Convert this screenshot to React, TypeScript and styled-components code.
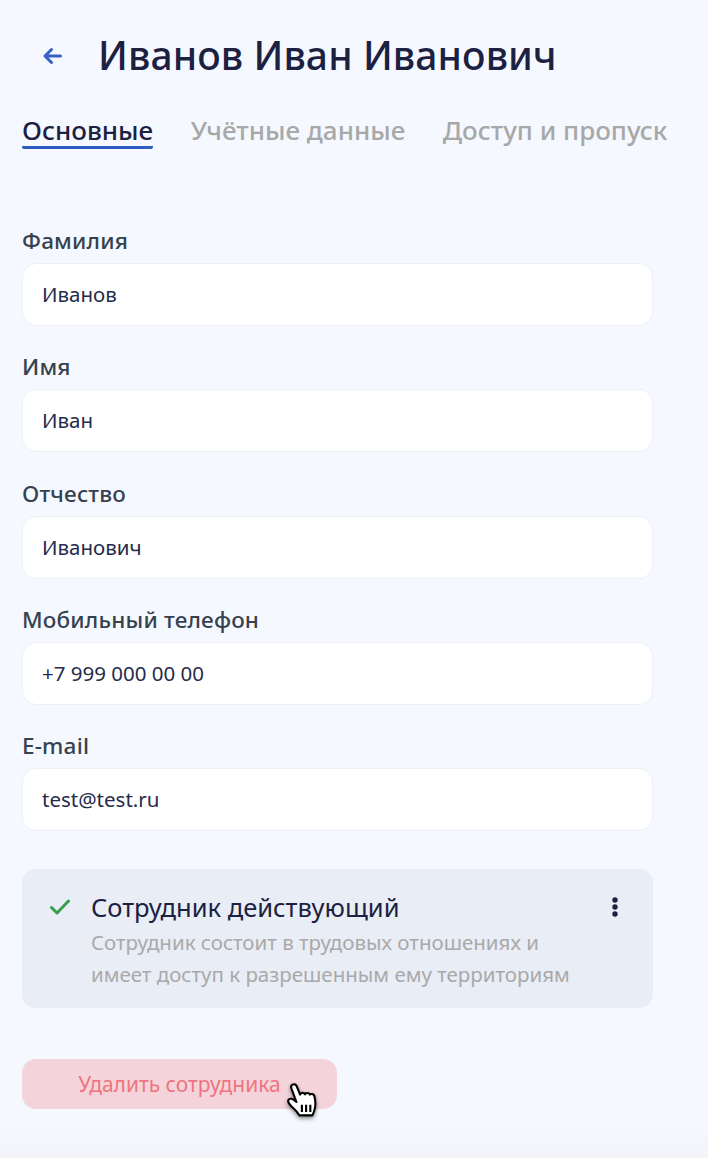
import React from "react";
import styled, { createGlobalStyle } from "styled-components";

const Global = createGlobalStyle`
  html, body { margin: 0; padding: 0; }
  body { font-family: "Noto Sans", "Open Sans", sans-serif; background: #f5f8ff; }
  * { box-sizing: border-box; }
`;

const Page = styled.div`
  width: 708px;
  height: 1158px;
  overflow: hidden;
  padding: 0 55px 0 22px;
  background: linear-gradient(to bottom, #f5f8ff 0, #f5f8ff 1120px, #f2f4f9 1158px);
`;

const Header = styled.header`
  display: flex;
  align-items: center;
  height: 50px;
  margin-top: 31px;
  padding-left: 20px;
  gap: 36px;
`;

const BackButton = styled.button`
  display: flex;
  width: 20px;
  height: 20px;
  padding: 0;
  border: 0;
  background: none;
  color: #3560c8;
`;

const Title = styled.h1`
  margin: 0;
  font-size: 39px;
  letter-spacing: 0.1px;
  line-height: 48px;
  height: 50px;
  font-weight: 500;
  color: #1c2142;
  white-space: nowrap;
`;

const Tabs = styled.nav`
  display: flex;
  gap: 37.5px;
  margin-top: 32px;
  height: 36px;
  white-space: nowrap;
`;

const Tab = styled.div<{ $active?: boolean }>`
  height: 36px;
  font-size: 26px;
  line-height: 34px;
  font-weight: 500;
  color: ${(p) => (p.$active ? "#1c2142" : "#a8a8a8")};
  border-bottom: ${(p) => (p.$active ? "3px solid #2f5bc4" : "0")};
  border-radius: 2px;
`;

const Form = styled.form`
  margin-top: 75px;
  display: flex;
  flex-direction: column;
  gap: 24.33px;
`;

const Field = styled.label`
  display: flex;
  flex-direction: column;
  gap: 4px;
`;

const Label = styled.span`
  font-size: 22.5px;
  letter-spacing: 0.18px;
  line-height: 33px;
  height: 35px;
  font-weight: 500;
  color: #36424e;
`;

const Input = styled.div`
  height: 63px;
  padding: 0 19px 1px;
  display: flex;
  align-items: center;
  background: #fff;
  border: 1px solid #edf0f6;
  border-radius: 14px;
  font-size: 20.5px;
  color: #262b4a;
`;

const StatusCard = styled.section`
  margin-top: 38px;
  height: 139px;
  padding: 20px 35px 0 28px;
  display: flex;
  background: #e9edf6;
  border-radius: 14px;
`;

const CheckIcon = styled.svg`
  flex: none;
  width: 20px;
  height: 16px;
  margin-top: 10px;
  color: #37a04a;
`;

const StatusBody = styled.div`
  flex: 1;
  margin-left: 21px;
`;

const StatusTitle = styled.div`
  font-size: 25.5px;
  line-height: 36px;
  color: #1c2142;
`;

const StatusText = styled.div`
  margin-top: 1px;
  font-size: 20.5px;
  line-height: 32px;
  color: #a9a9a9;
`;

const MoreIcon = styled.svg`
  flex: none;
  width: 6px;
  height: 20px;
  margin-top: 8px;
  color: #1c2142;
`;

const DeleteWrap = styled.div`
  position: relative;
  width: 315px;
  margin-top: 51px;
`;

const DeleteButton = styled.button`
  width: 100%;
  height: 50px;
  padding: 0;
  border: 0;
  border-radius: 14px;
  background: #f4d4da;
  color: #ee7480;
  font-family: inherit;
  font-size: 21px;
  line-height: 50px;
`;

const Cursor = styled.svg`
  position: absolute;
  left: 264px;
  top: 23px;
  width: 36px;
  height: 40px;
  filter: drop-shadow(0 2px 2px rgba(0, 0, 0, 0.45));
`;

const fields = [
  ["Фамилия", "Иванов"],
  ["Имя", "Иван"],
  ["Отчество", "Иванович"],
  ["Мобильный телефон", "+7 999 000 00 00"],
  ["E-mail", "test@test.ru"],
];

export default function App() {
  return (
    <Page>
      <Global />
      <Header>
        <BackButton aria-label="Назад">
          <svg width="20" height="20" viewBox="0 0 20 20" fill="none">
            <path
              d="M18.5 10H3M9.5 3.5L3 10l6.5 6.5"
              stroke="currentColor"
              strokeWidth="3"
              strokeLinecap="round"
              strokeLinejoin="round"
            />
          </svg>
        </BackButton>
        <Title>Иванов Иван Иванович</Title>
      </Header>
      <Tabs>
        <Tab $active>Основные</Tab>
        <Tab>Учётные данные</Tab>
        <Tab>Доступ и пропуск</Tab>
      </Tabs>
      <Form>
        {fields.map(([label, value]) => (
          <Field key={label}>
            <Label>{label}</Label>
            <Input>{value}</Input>
          </Field>
        ))}
      </Form>
      <StatusCard>
        <CheckIcon viewBox="0 0 20 16" fill="none">
          <path
            d="M1.500 8.500L7 14L18.500 2"
            stroke="currentColor"
            strokeWidth="3"
            strokeLinecap="round"
            strokeLinejoin="round"
          />
        </CheckIcon>
        <StatusBody>
          <StatusTitle>Сотрудник действующий</StatusTitle>
          <StatusText>
            Сотрудник состоит в трудовых отношениях и
            <br />
            имеет доступ к разрешенным ему территориям
          </StatusText>
        </StatusBody>
        <MoreIcon viewBox="0 0 6 20" fill="currentColor">
          <circle cx="3" cy="3" r="2.700" />
          <circle cx="3" cy="10" r="2.700" />
          <circle cx="3" cy="17" r="2.700" />
        </MoreIcon>
      </StatusCard>
      <DeleteWrap>
        <DeleteButton type="button">Удалить сотрудника</DeleteButton>
        <Cursor viewBox="0 0 34 38">
          <path
            d="M6 2.500c2-1 3.500 0 4.300 2l3 7.500c.3-2 3.700-2.300 4.700-.3.5-1.500 3.700-1.800 4.600.3.8-1 3.600-.8 4.200 1.200 1 3.400 1.200 7 .8 10.500-.3 3-1.300 5.500-2.600 8H12.500c-1.500-2.800-4-5.500-7-8.200C3.500 21.500 1.500 19.500 2 17.500c.6-2 3.300-2 5-.8l2.800 2.300L5 6c-.5-1.500-.3-2.800 1-3.500z"
            fill="#fff"
            stroke="#000"
            strokeWidth="2"
            strokeLinejoin="round"
          />
          <path d="M15 21.500v7M19 21.500v7M23 21.500v7" stroke="#000" strokeWidth="2" fill="none" />
        </Cursor>
      </DeleteWrap>
    </Page>
  );
}
